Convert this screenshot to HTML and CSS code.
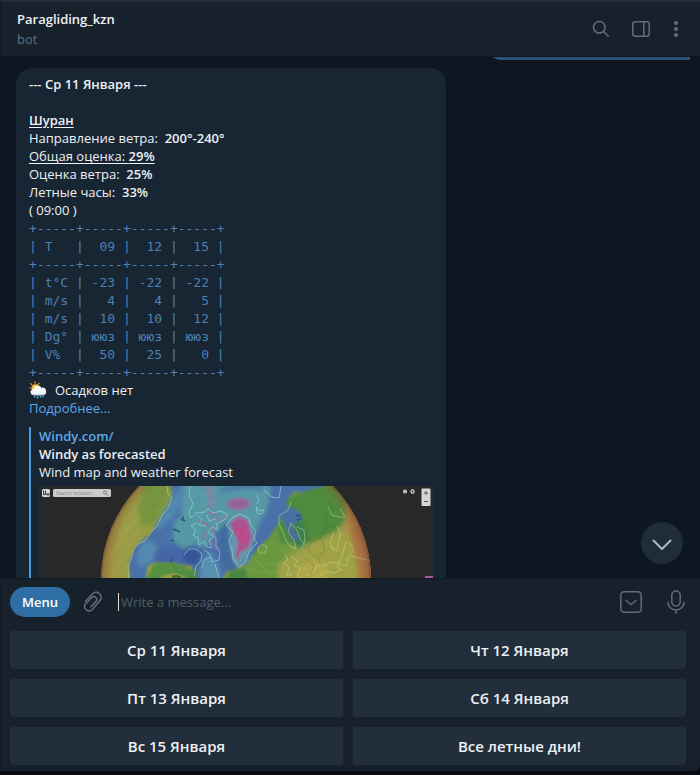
FILE: index.html
```html
<!DOCTYPE html>
<html lang="ru">
<head>
<meta charset="utf-8">
<title>Paragliding_kzn</title>
<link rel="stylesheet" href="styles.css">
</head>
<body>
<div class="app">
  <header class="topbar">
    <div class="peer">
      <h1 class="peer-name">Paragliding_kzn</h1>
      <p class="peer-status">bot</p>
    </div>
    <button class="icon-btn" type="button" aria-label="Search">
      <svg width="18" height="18" viewBox="0 0 18 18" fill="none" stroke="currentColor" stroke-width="1.5" stroke-linecap="round"><circle cx="7.3" cy="7.3" r="5.8"/><path d="M11.5 11.5 16.3 16.3"/></svg>
    </button>
    <button class="icon-btn" type="button" aria-label="Side panel">
      <svg width="18" height="18" viewBox="0 0 18 18" fill="none" stroke="currentColor" stroke-width="1.5"><rect x=".8" y="1.8" width="16.4" height="14.4" rx="2.4"/><path d="M11.8 2v14"/></svg>
    </button>
    <button class="icon-btn icon-btn-narrow" type="button" aria-label="More">
      <svg width="6" height="18" viewBox="0 0 6 18" fill="currentColor"><circle cx="3" cy="3" r="2.1"/><circle cx="3" cy="9" r="2.1"/><circle cx="3" cy="15" r="2.1"/></svg>
    </button>
  </header>

  <main class="chat">
    <div class="bubble-out"></div>
    <article class="bubble-in">
      <p><b>--- Ср 11 Января ---</b></p>
      <p class="section"><b><u>Шуран</u></b></p>
      <p>Направление ветра:&nbsp; <b>200°-240°</b></p>
      <p><u>Общая оценка: <b>29%</b></u></p>
      <p>Оценка ветра:&nbsp; <b>25%</b></p>
      <p>Летные часы:&nbsp; <b>33%</b></p>
      <p>( 09:00 )</p>
<pre class="forecast"><code>+-----+-----+-----+-----+
| T   |  09 |  12 |  15 |
+-----+-----+-----+-----+
| t°C | -23 | -22 | -22 |
| m/s |   4 |   4 |   5 |
| m/s |  10 |  10 |  12 |
| Dg° | ююз | ююз | ююз |
| V%  |  50 |  25 |   0 |
+-----+-----+-----+-----+</code></pre>
      <p class="rain">
        <svg width="18" height="18" viewBox="0 0 18 18" aria-hidden="true">
          <g stroke="#f5a623" stroke-width="1.2" stroke-linecap="round"><path d="M6 .8v1.4M1.8 2.6l1 1M.8 7h1.3M10.2 2.4l-1 1M1.9 11l.9-.8"/></g>
          <circle cx="6.3" cy="7" r="3.7" fill="#fbc02d"/>
          <path d="M5 14.2a3.1 3.1 0 0 1-.4-6.2 4.2 4.2 0 0 1 7.8-1.3 3.8 3.8 0 0 1 1.8 7.5z" fill="#f4f6f7"/>
          <path d="M2.2 12.2q1 2 2.8 2h9.2q2.2-.2 3.2-2.2-2 1.4-4.6.9-2 .9-4 .1-3.4 1-6.6-.8z" fill="#c9d3d8"/>
          <path d="M6 15.2l-.5 1M9 15.7l-.5 1.5M12 15.2l-.5 1M14.5 15.2l-.3.7" stroke="#3fa9e0" stroke-width="1.3" stroke-linecap="round"/>
        </svg>
        <span>Осадков нет</span>
      </p>
      <p><a href="#more">Подробнее...</a></p>

      <section class="preview">
        <p><a href="#windy"><b>Windy.com/</b></a></p>
        <p><b>Windy as forecasted</b></p>
        <p>Wind map and weather forecast</p>
        <svg class="globe" viewBox="0 0 394 206" role="img" aria-label="Wind map globe">
          <defs>
            <clipPath id="disc"><circle cx="197" cy="94" r="135"/></clipPath>
            <filter id="soft" x="-10%" y="-10%" width="120%" height="120%"><feGaussianBlur stdDeviation="2.2"/></filter>
            <filter id="fine"><feGaussianBlur stdDeviation=".9"/></filter>
            <radialGradient id="limb" gradientUnits="userSpaceOnUse" cx="197" cy="94" r="135">
              <stop offset=".92" stop-color="#8a5a35" stop-opacity="0"/>
              <stop offset=".98" stop-color="#8a5a35" stop-opacity=".4"/>
              <stop offset="1" stop-color="#70452f" stop-opacity=".85"/>
            </radialGradient>
            <linearGradient id="land" gradientUnits="userSpaceOnUse" x1="62" y1="0" x2="332" y2="0">
              <stop offset="0" stop-color="#a08c42"/><stop offset=".08" stop-color="#9d9c46"/><stop offset=".26" stop-color="#8c9c42"/>
              <stop offset=".65" stop-color="#6a963f"/><stop offset=".82" stop-color="#9ba146"/><stop offset="1" stop-color="#ab7d44"/>
            </linearGradient>
          </defs>
          <rect width="394" height="206" fill="#282828"/>
          <g clip-path="url(#disc)">
            <rect x="60" y="-45" width="275" height="275" fill="url(#land)"/>
            <g filter="url(#soft)">
              <path d="M106-5h26l-3 18-14 25-12 3-4-18z" fill="#76943e"/>
              <path d="M240 15l45-20 22 8 0 30-14 18-24 8-30-2z" fill="#4f8a3e"/>
              <path d="M250 30l12 4 6 14-4 16-10-6z" fill="#3c7d52"/>
              <path d="M214 68l18-20 14 14-4 40h-38z" fill="#6b9840"/>
              <path d="M240 78l33-22 30-12 14 16 2 40h-80z" fill="#a0a146"/>
              <path d="M308 16l14 16 18 66h-18l-8-34z" fill="#a97843"/>
              <path d="M318 42q11 18 14 50" stroke="#a75e44" stroke-width="4" fill="none"/>
              <path d="M264 78q16-8 24 4t-12 16-20-4z" fill="#b2a949"/>
            </g>
            <g filter="url(#fine)">
              <path d="M131-4l3 16-10 17-11 17-9 8-8 7-6 15 1 18h15l3-15 8-3 20-2 16 5 2 16 29-3 5-11 13-2 5 0 8-12 16-17 8-12 7-12 2-12 6-8 10 0 22-6 6-14 0-10z" fill="#4a6fa8"/>
              <path d="M241 25l9-5 10 5 4 8-9 4-3 4 8 10-5 5-8-13z" fill="#4670a4"/>
            </g>
            <g filter="url(#soft)">
              <path d="M143-4h86l3 8-4 20-6 10-10 20-3 20-8 6-9-10-3-20-6-10-8 8-8 14-12-4-12 5-10-10 2-16 8-10z" fill="#5699a6"/>
              <path d="M136 4l10-1-2 14-12 17-12 10-5-2 12-20z" fill="#5087ae"/>
              <path d="M160 96l3-20 8-10 8 14 4 15z" fill="#5690b0"/>
              <path d="M103 56l10-2 6 10-6 12-12 6-4-10z" fill="#5488b0"/>
              <path d="M115 66l24-8 10 10-2 12-30-4z" fill="#4466a6"/>
              <ellipse cx="153" cy="70" rx="9" ry="9" fill="#36549a"/>
              <path d="M182 40l7-4 3 26 7 22-12 2-7-20z" fill="#3f6aa0"/>
              <path d="M180 6q20-8 44-4" stroke="#456fa8" stroke-width="4" fill="none"/>
            </g>
            <g filter="url(#fine)">
              <path d="M168-2q6 12 4 24" stroke="#8f7da6" stroke-width="8" fill="none" opacity=".6"/>
              <ellipse cx="200" cy="18" rx="13" ry="7" fill="#7f7fa5"/>
              <ellipse cx="199" cy="18" rx="10" ry="5" fill="#98619b"/>
              <path d="M188 38l12-10 11 4 2 10 3 10-4 12-7 6-5 12-6-6-3-14 3-14z" fill="#6a93ac"/>
              <path d="M191 37l9-6 9 4 4 18-5 10-7 3-2 8-2-4 2-14-5-10z" fill="#ac538f"/>
              <path d="M198 40l7 2 3 12-4 6z" fill="#bb4a86"/>
              <path d="M109 90l6-12 21-1 16 7 1 14h-52z" fill="#55903f"/>
              <path d="M119 96q4-9 16-8 12 0 13 10z" fill="#9aa346"/>
              <path d="M186 98l6-13 14-3 4 16z" fill="#488842"/>
              <path d="M150 84h8v12h-8z" fill="#4d8746"/>
            </g>
            <g fill="none" stroke="#a06a9c" stroke-width="2" opacity=".75">
              <path d="M166 25l12 4M160 34l10 6M178 37l12-7M166 44l-2 10M172 40l4 8M172 54l6 10M180 32l-7 2"/>
            </g>
            <g stroke="#27486e" stroke-width="1.5" fill="none" opacity=".8">
              <path d="M142 33l4 2M134 43l5 2 2 1M144 30v5M132 54l3 1M134 71l-2 5M257 29l5 1M258 34l4-1"/>
            </g>
            <path d="M133 91q7-2 9 2" stroke="#496b36" stroke-width="2.5" fill="none"/>
            <g fill="none" stroke="#c6d68c" stroke-width="1" opacity=".55">
              <path d="M128 0l1 8 4 4-4 10-7 9-3 8-8 8-4 7-8 4-5 6-2 10-3 6 1 14"/>
              <path d="M252 16l-3 8-9 6 0 8 4 8 2 7 5 7 6 3-2-9-6-8 3-9 6 7 3 9 5 6M258 41l7 3 1 11-4 8"/>
              <path d="M289 21l4 8 7 2 6 0-5-9M295 46l-4 10 4 9M298 40l3 8-3 17-7-5M307 56l-4 14-4 8 8 2 3-10 5-6-5-8M312 70l20 5"/>
              <path d="M246 68l3 5-4 4 5 5-3 8 7-2M252 70l6 5-3 5 7 1-4 8 4 4M268 90l8-6 1-5 10 0 4-3 9 1-2 4 5 3-8 3-8-2-6 5M219 62l4-4 5 3-2 6-6 0z"/>
            </g>
            <g fill="none" stroke="#96d6d3" stroke-width="1" opacity=".65">
              <path d="M151 0l-1 10 4 7-4 10 2 5 5-5 9-1 3-3 5 4 7-2 5 2 3 2-4 5-8 4 2 6-6-3-4 5 6 5-5 3 3 8-5-1-3-6-5 4-1-7-5-3 3-5-5-4 7-3"/>
              <path d="M158 29l5 5-3 5 7 1M168 29l2 6 7-2M173 46l4 6 0 8 4 6-1 8-7 2-2-8-6-4M145 69l5-6 7 0 6 5-1 7-5 5-2 10M163 82l2-8 7-3M176 78l4 14"/>
              <path d="M187 39l7-8 7-3 9 4 1 6 6 7-2 8 3 4-8 9-4 11-6 4-6-8-1-9-3-9 4-9z"/>
              <path d="M217 9l3 4-2 5M217 21l3 4 5-1-2 4-5-1zM225 4l8 7 7 1 2-12"/>
            </g>
            <g fill="none" stroke="#365f40" stroke-width=".7" opacity=".4">
              <path d="M265 50l7 6-3 8 8 8M272 56l10-4 3-9 12-3M282 52l4 12-7 8 3 8M265 71l10 8-5 14M289 13l4 8-7 10 2 11M118 62q10 14 24 26"/>
            </g>
            <g fill="none" stroke="#d8dda0" stroke-width=".6" opacity=".2">
              <path d="M62 88Q100 20 138-12M72 94Q96 38 150-10M80 50q40-38 110-46M66 74q40-44 110-58M220 78q45 4 95-38M212 70q16 12 26 30M235 45q14 24 20 60M205 83q50 12 130-20"/>
            </g>
            <circle cx="197" cy="94" r="135" fill="url(#limb)"/>
          </g>
          <rect x="3" y="3" width="8" height="8" rx="1.5" fill="#dadada"/>
          <path d="M4.5 4.5v4h2v-4M8 7v2h2V7" stroke="#333" fill="none"/>
          <rect x="14" y="3" width="58" height="8" rx="1.5" fill="#cbcbcb"/>
          <text x="17" y="9" class="map-label">Search location...</text>
          <circle cx="66" cy="6.5" r="1.6" fill="none" stroke="#777" stroke-width=".8"/><path d="M67.2 7.7l2 2" stroke="#777"/>
          <circle cx="366" cy="5.5" r="2" fill="#ddd"/><path d="M366 4.5v2" stroke="#555" stroke-width=".7"/>
          <circle cx="373.5" cy="5.5" r="1.6" fill="none" stroke="#ddd" stroke-width="1.2"/>
          <rect x="382.5" y="2.5" width="9" height="17.5" rx="1" fill="#d6d6d6"/>
          <path d="M385 7h4M387 5v4M385 15.5h4" stroke="#555"/>
          <rect x="386" y="90" width="8" height="5" fill="#a9589d"/>
        </svg>
      </section>
    </article>
    <button class="to-bottom" type="button" aria-label="Scroll to bottom">
      <svg width="20" height="12" viewBox="0 0 20 12" fill="none" stroke="currentColor" stroke-width="2" stroke-linecap="round" stroke-linejoin="round"><path d="M1.5 1.5 10 10l8.5-8.5"/></svg>
    </button>
  </main>

  <footer class="bottom">
    <form class="composer">
      <button class="menu-btn" type="button">Menu</button>
      <button class="icon-btn attach" type="button" aria-label="Attach file">
        <svg width="22" height="24" viewBox="0 0 22 24" fill="none" stroke="currentColor" stroke-width="1.5" stroke-linecap="round"><path d="M3.5 11.3 10.2 4.3a5 5 0 0 1 8 6L10.3 19.5a4.500 4.500 0 0 1-7.100-5.400L9.800 7.500a2.900 2.900 0 0 1 4.500 3.600L9 16.800"/></svg>
      </button>
      <input class="message" type="text" aria-label="Message" placeholder="Write a message...">
      <button class="icon-btn" type="button" aria-label="Bot keyboard">
        <svg width="22" height="22" viewBox="0 0 22 22" fill="none" stroke="currentColor" stroke-width="1.5" stroke-linecap="round" stroke-linejoin="round"><rect x=".8" y=".8" width="20.4" height="20.4" rx="3.5"/><path d="M6 9.5l5 4 5-4"/></svg>
      </button>
      <button class="icon-btn" type="button" aria-label="Voice message">
        <svg width="18" height="24" viewBox="0 0 18 24" fill="none" stroke="currentColor" stroke-width="1.5" stroke-linecap="round"><rect x="4.8" y="1" width="8.4" height="15" rx="4.2"/><path d="M1 12.5a8 7.5 0 0 0 16 0M9 20v3"/></svg>
      </button>
    </form>
    <div class="keyboard">
      <button type="button">Ср 11 Января</button>
      <button type="button">Чт 12 Января</button>
      <button type="button">Пт 13 Января</button>
      <button type="button">Сб 14 Января</button>
      <button type="button">Вс 15 Января</button>
      <button type="button">Все летные дни!</button>
    </div>
  </footer>
</div>
</body>
</html>
```
FILE: styles.css
```css
* {
  box-sizing: border-box;
}

body {
  margin: 0;
  background: #090b11;
  color: #edf1f4;
  font: 13px/18px "Open Sans", "Noto Sans", sans-serif;
}

h1,
p,
pre {
  margin: 0;
  font-size: 13px;
}

b,
h1 {
  font-weight: 600;
}

a {
  color: #5fa8e6;
  text-decoration: none;
}

u {
  text-underline-offset: 2px;
}

button,
input {
  border: 0;
  padding: 0;
  background: none;
  color: inherit;
  font: inherit;
}

svg {
  display: block;
}

.app {
  display: flex;
  flex-direction: column;
  height: 100vh;
  padding-bottom: 4px;
}

.topbar {
  display: flex;
  align-items: center;
  gap: 20px;
  height: 56px;
  padding: 0 19px 0 16px;
  border-top: 2px solid #242f3d;
  border-left: 1px solid #121a22;
  background: #17212b;
}

.peer {
  flex: 1;
  display: grid;
  gap: 2px;
}

.peer-status {
  color: #5c7186;
}

.icon-btn {
  display: grid;
  place-items: center;
  min-width: 20px;
  height: 24px;
  color: #616e79;
}

.icon-btn-narrow {
  min-width: 10px;
}

.chat {
  position: relative;
  flex: 1;
  min-height: 0;
  overflow: hidden;
  padding: 0 10px 0 16px;
  border-top: 1px solid #101820;
  background: #0e1621;
}

.bubble-out {
  width: 200px;
  height: 18px;
  margin: -15px 0 8px auto;
  border-radius: 12px 12px 0 16px;
  background: #2b5278;
}

.bubble-in {
  width: 430px;
  max-width: 100%;
  padding: 7px 13px;
  border-radius: 16px;
  background: #182533;
}

.section {
  margin-top: 18px;
}

.forecast {
  color: #4b81b5;
  font-family: inherit;
}

.forecast code {
  font-family: "DejaVu Sans Mono", monospace;
  font-size: 13px;
  line-height: 1;
}

.rain {
  display: flex;
  gap: 8px;
}

.preview {
  margin-top: 10px;
  padding-left: 8px;
  border-left: 2px solid #4a9ae0;
}

.globe {
  width: 100%;
  margin-top: 5px;
}

.map-label {
  fill: #888;
  font-size: 5px;
}

.to-bottom {
  position: absolute;
  right: 17px;
  bottom: 14px;
  display: grid;
  place-items: center;
  width: 42px;
  height: 42px;
  padding-top: 4px;
  border-radius: 50%;
  background: #1f2c3a;
  color: #b0b8bd;
}

.bottom {
  padding: 0 14px 6px 9px;
  border-top: 1px solid #111a22;
  border-left: 1px solid #121a22;
  border-bottom-right-radius: 6px;
  background: #17212b;
}

.composer {
  display: flex;
  align-items: center;
  gap: 24px;
  height: 46px;
  margin-bottom: 6px;
}

.menu-btn {
  width: 60px;
  height: 30px;
  border-radius: 15px;
  background: #2f6ea5;
  color: #fff;
  font-weight: 600;
}

.attach {
  margin: 0 -10px 0 -12px;
}

.message {
  flex: 1;
  min-width: 0;
  height: 18px;
  padding-left: 2px;
  border-left: 1px solid #e8e0d5;
  outline: 0;
}

.message::placeholder {
  color: #4f5b66;
  opacity: 1;
}

.keyboard {
  display: grid;
  grid-template-columns: 1fr 1fr;
  gap: 10px;
}

.keyboard button {
  height: 38px;
  border-radius: 3px;
  background: #232e3c;
  font-size: 15px;
  font-weight: 600;
}
```
